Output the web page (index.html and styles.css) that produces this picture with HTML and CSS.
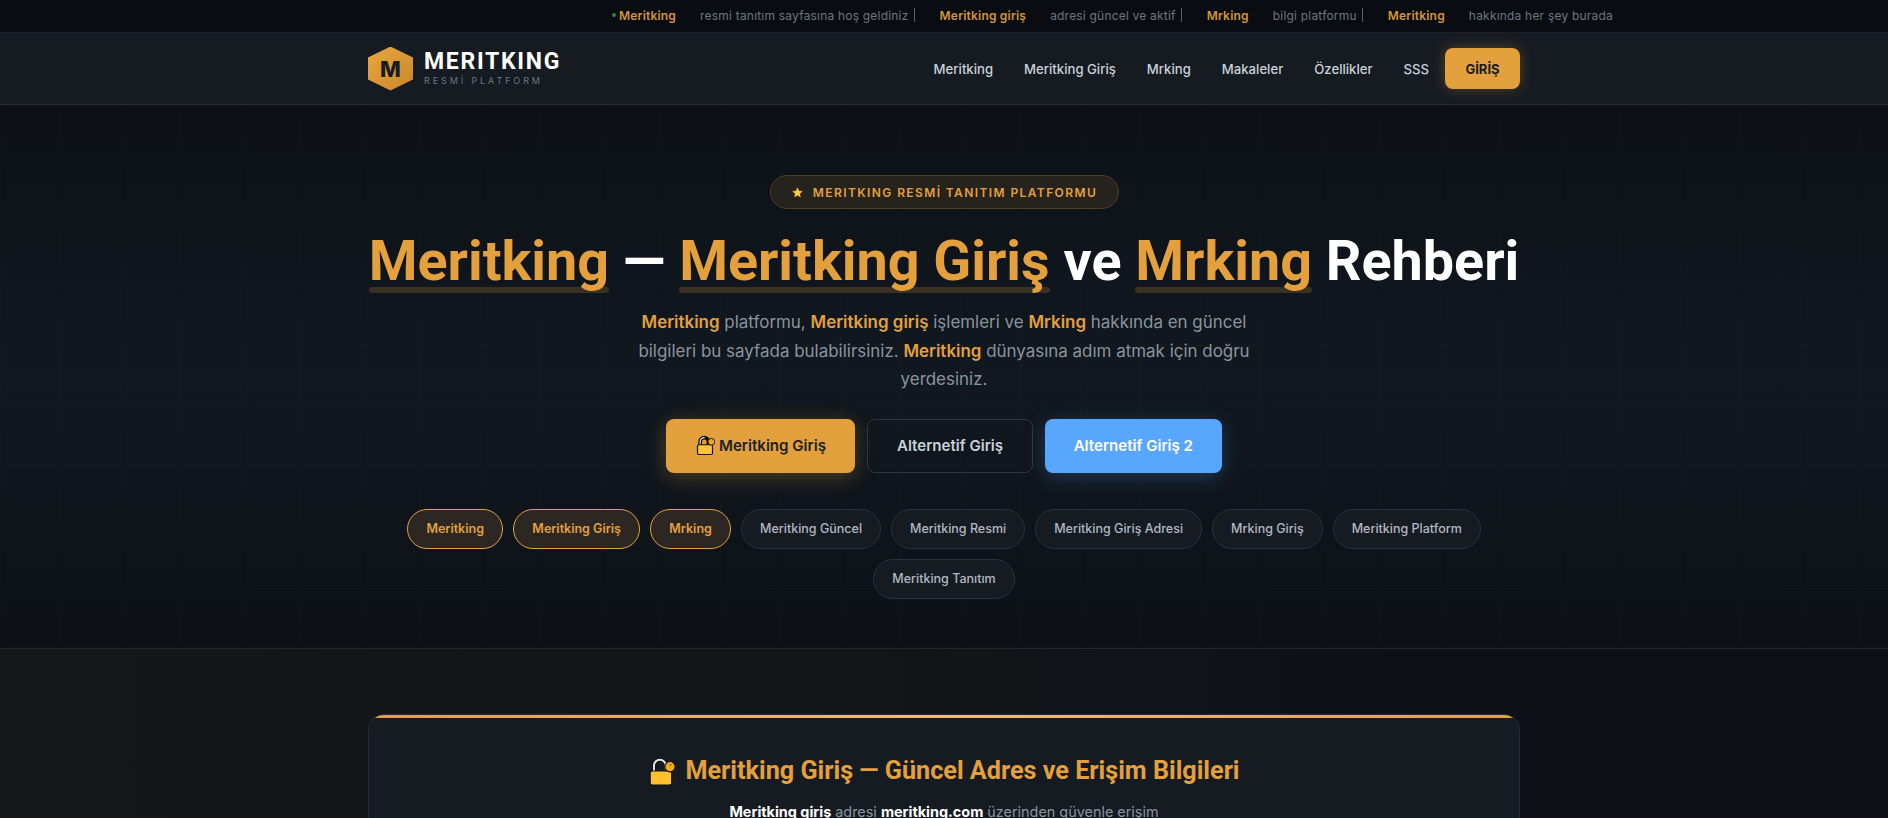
FILE: index.html
```html
<!DOCTYPE html>
<html lang="tr">
<head>
    <meta charset="UTF-8">
    <meta name="viewport" content="width=device-width, initial-scale=1.0">
    <title>Meritking Resmi Platform</title>
    <link rel="stylesheet" href="styles.css">
</head>
<body>
    <div class="ticker">
        <div class="ticker-track">
            <span class="dot"></span>
            <strong class="first">Meritking</strong>
            <span>resmi tanıtım sayfasına hoş geldiniz</span><i class="sep"></i>
            <strong>Meritking giriş</strong>
            <span>adresi güncel ve aktif</span><i class="sep"></i>
            <strong>Mrking</strong>
            <span>bilgi platformu</span><i class="sep"></i>
            <strong>Meritking</strong>
            <span>hakkında her şey burada</span>
        </div>
    </div>

    <nav class="navbar">
        <div class="container nav-inner">
            <a class="logo" href="#">
                <span class="logo-mark">M</span>
                <span class="logo-text">
                    <b>MERITKING</b>
                    <small>RESMİ PLATFORM</small>
                </span>
            </a>
            <div class="nav-links">
                <a href="#">Meritking</a>
                <a href="#">Meritking Giriş</a>
                <a href="#">Mrking</a>
                <a href="#">Makaleler</a>
                <a href="#">Özellikler</a>
                <a href="#">SSS</a>
                <a href="#" class="nav-cta">GİRİŞ</a>
            </div>
        </div>
    </nav>

    <header class="hero">
        <div class="container hero-inner">
            <div class="badge">
                <svg class="star" viewBox="0 0 24 24" width="13" height="13"><path d="M12 1.500l3.200 7 7.300.8-5.400 5 1.500 7.500L12 18l-6.600 3.800 1.500-7.500-5.400-5 7.300-.8z"/></svg>
                MERITKING RESMİ TANITIM PLATFORMU
            </div>
            <h1><em>Meritking</em> — <em>Meritking Giriş</em> ve <em>Mrking</em> Rehberi</h1>
            <p class="lead">
                <strong>Meritking</strong> platformu, <strong>Meritking giriş</strong> işlemleri ve <strong>Mrking</strong> hakkında en güncel bilgileri bu sayfada bulabilirsiniz. <strong>Meritking</strong> dünyasına adım atmak için doğru yerdesiniz.
            </p>
            <div class="hero-buttons">
                <a href="#" class="btn btn-gold">
                    <svg viewBox="0 0 26 28" width="19.500" height="21">
                        <path d="M5.500 14V9a5.500 5.500 0 0 1 11 0v4" fill="none" stroke="#111" stroke-width="5"/>
                        <path d="M5.500 14V9a5.500 5.500 0 0 1 6-5.500" fill="none" stroke="#eee" stroke-width="1.500"/>
                        <rect x="2" y="13" width="20" height="13" rx="2" fill="#ffc53a" stroke="#111" stroke-width="1.600"/>
                        <circle cx="20.500" cy="9" r="4.500" fill="#f0a81c" stroke="#111" stroke-width="1.200"/>
                    </svg>
                    Meritking Giriş
                </a>
                <a href="#" class="btn btn-dark">Alternetif Giriş</a>
                <a href="#" class="btn btn-blue">Alternetif Giriş 2</a>
            </div>
            <div class="chips">
                <a href="#" class="chip chip-on">Meritking</a>
                <a href="#" class="chip chip-on">Meritking Giriş</a>
                <a href="#" class="chip chip-on">Mrking</a>
                <a href="#" class="chip">Meritking Güncel</a>
                <a href="#" class="chip">Meritking Resmi</a>
                <a href="#" class="chip">Meritking Giriş Adresi</a>
                <a href="#" class="chip">Mrking Giriş</a>
                <a href="#" class="chip">Meritking Platform</a>
                <a href="#" class="chip">Meritking Tanıtım</a>
            </div>
        </div>
    </header>

    <section class="access">
        <div class="container">
            <div class="access-card">
                <h2>
                    <svg viewBox="0 0 26 28" width="28" height="30">
                        <path d="M5.500 14V9a5.500 5.500 0 0 1 11 0v4" fill="none" stroke="#111" stroke-width="3.400"/>
                        <path d="M5.500 14V9a5.500 5.500 0 0 1 11 0v4" fill="none" stroke="#e8e8e8" stroke-width="1.800"/>
                        <rect x="2" y="14" width="20" height="13" rx="2" fill="#ffc02e" stroke="#111" stroke-width="1"/>
                        <circle cx="20.500" cy="10" r="4.800" fill="#f0a81c" stroke="#111" stroke-width="1"/>
                        <circle cx="21" cy="8.500" r="1" fill="#a86c10"/>
                    </svg>
                    Meritking Giriş — Güncel Adres ve Erişim Bilgileri
                </h2>
                <p><strong>Meritking giriş</strong> adresi <strong>meritking.com</strong> üzerinden güvenle erişim</p>
            </div>
        </div>
    </section>
</body>
</html>
```

FILE: styles.css
```css
* {
    box-sizing: border-box;
}
body {
    font-family: 'Inter', 'Liberation Sans', sans-serif;
    background-color: #0d1117;
    margin: 0;
    color: #c9d1d9;
}
a {
    text-decoration: none;
    color: inherit;
}
.container {
    width: 1152px;
    margin: 0 auto;
}

/* top ticker */
.ticker {
    height: 33px;
    background: #090c10;
    border-bottom: 1px solid #1e232b;
    overflow: hidden;
}
.ticker-track {
    display: flex;
    align-items: center;
    height: 32px;
    padding-left: 612px;
    padding-bottom: 2px;
    font-size: 12px;
    letter-spacing: 0.2px;
    color: #6e7681;
    white-space: nowrap;
}
.ticker-track strong {
    color: #d3953a;
    font-weight: 600;
    margin-left: 25px;
    margin-right: 24px;
}
.ticker-track strong.first {
    margin-left: 3px;
}
.dot {
    width: 4px;
    height: 4px;
    border-radius: 50%;
    background: #2f8a3f;
}
.sep {
    width: 1px;
    height: 14px;
    margin-left: 5px;
    background: #5a626c;
}

/* nav */
.navbar {
    height: 72px;
    background: #161b22;
    border-bottom: 1px solid #262c35;
}
.nav-inner {
    height: 71px;
    display: flex;
    align-items: center;
    justify-content: space-between;
}
.logo {
    display: flex;
    align-items: center;
    gap: 11px;
}
.logo-mark {
    width: 45px;
    height: 44px;
    display: flex;
    align-items: center;
    justify-content: center;
    clip-path: polygon(50% 0, 100% 25%, 100% 75%, 50% 100%, 0 75%, 0 25%);
    background: linear-gradient(135deg, #e8a83f, #c9862a);
    color: #161b22;
    font-weight: 800;
    font-size: 22px;
}
.logo-text {
    display: flex;
    flex-direction: column;
}
.logo-text b {
    font-family: 'Roboto', sans-serif;
    color: #fff;
    font-size: 23px;
    line-height: 24px;
    font-weight: 700;
    letter-spacing: 1.700px;
}
.logo-text small {
    color: #6e7681;
    font-size: 9px;
    line-height: 14px;
    letter-spacing: 2.900px;
}
.nav-links {
    display: flex;
    align-items: center;
    gap: 31px;
    font-size: 13.150px;
    font-weight: 500;
    color: #c9d1d9;
}
.nav-cta {
    margin-left: -15px;
    width: 75px;
    height: 41px;
    display: flex;
    align-items: center;
    justify-content: center;
    background: #e3a03c;
    color: #161b22;
    border-radius: 8px;
    font-weight: 700;
    font-size: 13px;
    box-shadow: 0 0 14px rgba(227, 160, 60, 0.3);
}

/* hero */
.hero {
    height: 544px;
    border-bottom: 1px solid #21262d;
    background-color: #0d1117;
    background-image:
        linear-gradient(rgba(227, 160, 60, 0.02) 1px, transparent 1px),
        linear-gradient(90deg, rgba(227, 160, 60, 0.02) 1px, transparent 1px),
        linear-gradient(180deg, #0d1117, #11181f 50%, #0d1117);
    background-size: 60px 60px, 60px 60px, auto;
}
.hero-inner {
    display: flex;
    flex-direction: column;
    align-items: center;
    padding-top: 70px;
}
.badge {
    height: 34px;
    width: 349px;
    display: flex;
    align-items: center;
    justify-content: center;
    gap: 9px;
    border-radius: 17px;
    border: 1px solid #4d3e26;
    background: #26221e;
    color: #e3a03c;
    font-size: 12px;
    font-weight: 600;
    letter-spacing: 1.400px;
}
.star {
    fill: #ffc83d;
    stroke: #1b1710;
    stroke-width: 1;
}
h1 {
    font-family: 'Roboto', sans-serif;
    margin: 18px 0 0;
    font-size: 55.700px;
    line-height: 68px;
    font-weight: 700;
    color: #fff;
    white-space: nowrap;
}
h1 em {
    position: relative;
    font-style: normal;
    color: #e3a03c;
}
h1 em::after {
    content: "";
    position: absolute;
    left: 0;
    right: 0;
    bottom: 1px;
    height: 6px;
    border-radius: 3px;
    background: rgba(227, 160, 60, 0.2);
}
.lead {
    width: 640px;
    margin: 13px 0 0;
    text-align: center;
    font-size: 16.950px;
    line-height: 28.600px;
    color: #8b949e;
}
.lead strong {
    color: #e3a03c;
    font-weight: 600;
}
.hero-buttons {
    display: flex;
    gap: 12px;
    margin-top: 25px;
}
.btn {
    height: 54px;
    padding: 0 28.500px;
    display: flex;
    align-items: center;
    justify-content: center;
    gap: 4px;
    border-radius: 8px;
    font-size: 15.100px;
    font-weight: 600;
}
.btn-gold {
    padding: 0 29.500px;
    background: #e3a03c;
    color: #1c1f24;
    box-shadow: 0 4px 20px rgba(227, 160, 60, 0.3);
}
.btn-dark {
    border: 1px solid #30363d;
    color: #c9d1d9;
}
.btn-blue {
    padding: 0 29px;
    background: #58a6ff;
    color: #fff;
    box-shadow: 0 4px 20px rgba(88, 166, 255, 0.25);
}
.chips {
    width: 1100px;
    display: flex;
    flex-wrap: wrap;
    justify-content: center;
    gap: 10px 10px;
    margin-top: 36px;
}
.chip {
    height: 40px;
    padding: 0 18px;
    display: flex;
    align-items: center;
    border-radius: 20px;
    border: 1px solid #2b313a;
    background: #161b22;
    color: #b1b8c2;
    font-size: 12.500px;
    font-weight: 500;
}
.chip-on {
    padding: 0 18.200px;
    border-color: #e3a03c;
    background: #2c2722;
    color: #e3a03c;
    font-weight: 600;
}

/* access card */
.access {
    padding-top: 65px;
    padding-bottom: 60px;
    background: linear-gradient(90deg, #15171a, #131518 45%, #0d1117 75%);
}
.access-card {
    position: relative;
    overflow: hidden;
    height: 300px;
    padding-top: 40px;
    border-radius: 16px;
    border: 1px solid #262c35;
    background: #161b22;
    text-align: center;
}
.access-card::before {
    content: "";
    position: absolute;
    top: 0;
    left: 0;
    right: 0;
    height: 3px;
    background: linear-gradient(90deg, #e3a03c, #f0c060, #e3a03c);
}
.access-card h2 {
    font-family: 'Roboto', sans-serif;
    margin: 0;
    display: flex;
    align-items: center;
    justify-content: center;
    gap: 9px;
    font-size: 25.200px;
    line-height: 32px;
    font-weight: 700;
    color: #e3a03c;
}
.access-card p {
    margin: 16px 0 0;
    font-size: 14.400px;
    color: #8b949e;
}
.access-card strong {
    color: #fff;
}
```
